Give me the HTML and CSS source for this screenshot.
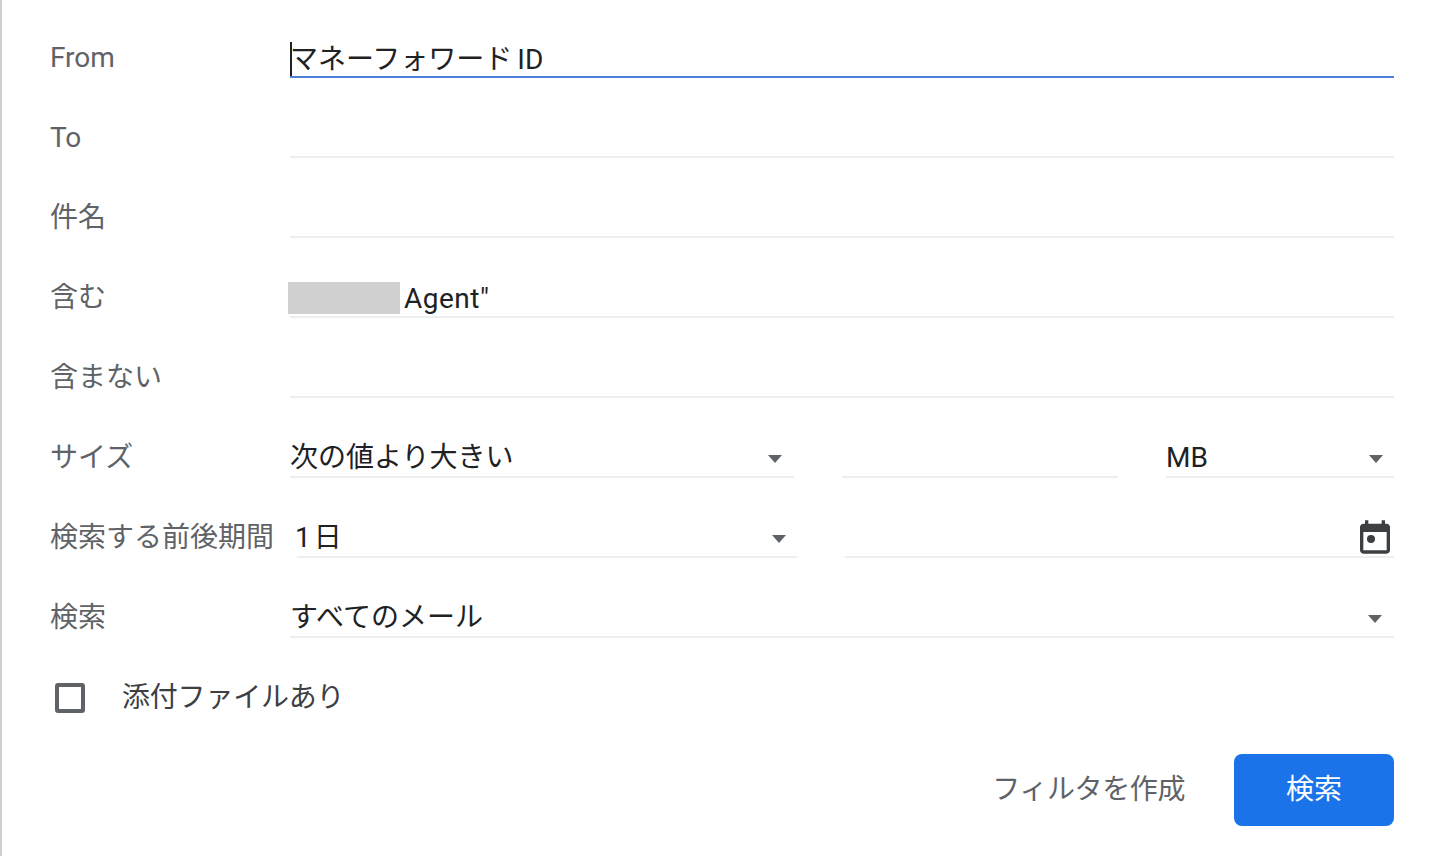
FILE: index.html
```html
<!DOCTYPE html>
<html lang="ja">
<head>
  <meta charset="UTF-8" />
  <meta name="viewport" content="width=device-width, initial-scale=1.0"/>
  <title>Search Mail</title>

  <link rel="stylesheet" href="styles.css">
</head>
<body>

  <form class="search-form">

    <div class="row">
      <label class="row-label">From</label>
      <div class="field field-active"><span class="caret"></span><span class="active-text">マネーフォワード ID</span></div>
    </div>

    <div class="row">
      <label class="row-label">To</label>
      <div class="field"></div>
    </div>

    <div class="row">
      <label class="row-label">件名</label>
      <div class="field"></div>
    </div>

    <div class="row">
      <label class="row-label">含む</label>
      <div class="field"><span class="redacted"></span><span class="agent-text">Agent"</span></div>
    </div>

    <div class="row">
      <label class="row-label">含まない</label>
      <div class="field"></div>
    </div>

    <!-- Size -->
    <div class="row">
      <label class="row-label">サイズ</label>
      <div class="field select size-compare">
        <span>次の値より大きい</span>
        <svg class="arrow" viewBox="0 0 16 10"><path d="M1 1h14L8 9z"/></svg>
      </div>
      <div class="field size-value"></div>
      <div class="field select size-unit">
        <span>MB</span>
        <svg class="arrow" viewBox="0 0 16 10"><path d="M1 1h14L8 9z"/></svg>
      </div>
    </div>

    <!-- Date range -->
    <div class="row">
      <label class="row-label label-wide">検索する前後期間</label>
      <div class="field select date-range">
        <span>1日</span>
        <svg class="arrow" viewBox="0 0 16 10"><path d="M1 1h14L8 9z"/></svg>
      </div>
      <div class="field date-value">
        <svg class="calendar" viewBox="0 0 24 24"><path d="M19 4h-1V2h-2v2H8V2H6v2H5c-1.1 0-2 .9-2 2v14c0 1.1.9 2 2 2h14c1.1 0 2-.9 2-2V6c0-1.1-.9-2-2-2zm0 16H5V9h14v11z"/><circle cx="9.6" cy="13.2" r="2.4"/></svg>
      </div>
    </div>

    <div class="row">
      <label class="row-label">検索</label>
      <div class="field select search-in">
        <span>すべてのメール</span>
        <svg class="arrow" viewBox="0 0 16 10"><path d="M1 1h14L8 9z"/></svg>
      </div>
    </div>

    <!-- Attachment -->
    <div class="attachment-row">
      <span class="checkbox"></span>
      <span class="attachment-label">添付ファイルあり</span>
    </div>

    <!-- Actions -->
    <div class="actions">
      <span class="filter-link">フィルタを作成</span>
      <button type="button" class="search-button">検索</button>
    </div>

  </form>

</body>
</html>
```

FILE: styles.css
```css
body {
  margin: 0;
  height: 856px;
  overflow: hidden;
  background-color: #fff;
  border-left: 2px solid #cfcfcf;
  font-family: Roboto, 'Noto Sans CJK JP', sans-serif;
  color: #202124;
}

.search-form {
  padding: 0 46px 0 48px;
}

.row {
  display: flex;
  align-items: flex-end;
  height: 80px;
}

.row:first-child {
  height: 78px;
}

.row-label {
  flex: 0 0 240px;
  align-self: flex-end;
  padding-bottom: 2px;
  font-size: 28px;
  line-height: 36px;
  height: 36px;
  color: #5f6368;
}

.label-wide {
  flex-basis: 247px;
  white-space: nowrap;
}

.field {
  flex: 1;
  display: flex;
  align-items: center;
  box-sizing: border-box;
  height: 36px;
  font-size: 28px;
  line-height: 34px;
  border-bottom: 2px solid #eeeeee;
  white-space: nowrap;
}

.field-active {
  border-bottom-color: #4a80d8;
}

.caret {
  flex: none;
  width: 2px;
  height: 34px;
  background-color: #202124;
}

.active-text {
  margin-left: -2px;
  padding-top: 2px;
  word-spacing: -2px;
}

.redacted {
  flex: none;
  width: 112px;
  height: 32px;
  margin: -2px 4px 0 -2px;
  background-color: #d0d0d0;
}

.agent-text {
  letter-spacing: 0.5px;
}

.select {
  justify-content: space-between;
  padding-right: 12px;
}

.select span {
  padding-bottom: 2px;
}

.size-compare {
  flex: 0 0 504px;
  padding-right: 11px;
}

.size-value {
  flex: 0 0 276px;
  margin-left: 48px;
}

.size-unit {
  flex: 0 0 228px;
  margin-left: 48px;
  padding-right: 10px;
}

.date-range {
  flex: 0 0 500px;
  padding-right: 10px;
}

.date-range span {
  margin-left: -2px;
  letter-spacing: 3px;
}

.date-value {
  flex: 1;
  margin-left: 48px;
  justify-content: flex-end;
  overflow: visible;
}

.search-in {
  padding-right: 11px;
}

.arrow {
  width: 16px;
  height: 10px;
  fill: #5f6368;
}

.calendar {
  flex: none;
  width: 40px;
  height: 40px;
  margin: -4px -1px 0 0;
  fill: #3c4043;
}

.attachment-row {
  display: flex;
  align-items: center;
  height: 36px;
  margin-top: 42px;
  padding-left: 5px;
}

.checkbox {
  flex: none;
  box-sizing: border-box;
  width: 30px;
  height: 30px;
  border: 4px solid #5f6368;
  border-radius: 3px;
}

.attachment-label {
  margin-left: 37px;
  padding-bottom: 6px;
  font-size: 28px;
  letter-spacing: -0.2px;
  color: #3c4043;
}

.actions {
  display: flex;
  justify-content: flex-end;
  align-items: center;
  margin-top: 38px;
}

.filter-link {
  padding-bottom: 6px;
  font-size: 28px;
  letter-spacing: -0.4px;
  color: #5f6368;
}

.search-button {
  width: 160px;
  height: 72px;
  margin-left: 49px;
  padding: 0 0 6px;
  border: none;
  border-radius: 8px;
  background-color: #1a73e8;
  color: #fff;
  font-family: inherit;
  font-size: 28px;
}
```
